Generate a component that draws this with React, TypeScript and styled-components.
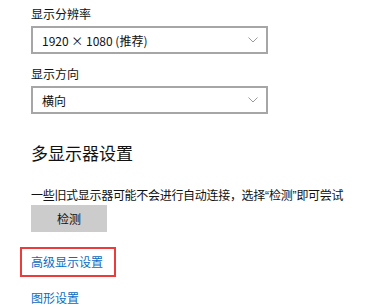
import React from "react";
import styled, { createGlobalStyle } from "styled-components";

const Global = createGlobalStyle`
  body {
    margin: 0;
    background: #fff;
    font-family: "Noto Sans CJK SC", "Microsoft YaHei", sans-serif;
    color: #000;
  }
`;

const Page = styled.div`
  width: 369px;
  height: 307px;
  overflow: hidden;
  padding: 6px 0 0 31px;
  box-sizing: border-box;
`;

const Label = styled.div`
  font-size: 12px;
  line-height: 16px;
  height: 16px;
  color: #111;
`;

const Select = styled.div`
  margin-top: 4px;
  width: 237px;
  height: 28px;
  box-sizing: border-box;
  border: 2px solid #a6a6a6;
  display: flex;
  align-items: center;
  justify-content: space-between;
  padding: 0 8px 0 9px;
  font-size: 12px;
  color: #111;
`;

const Field = styled.div<{ $top?: number }>`
  margin-top: ${(p) => p.$top ?? 0}px;
`;

const Heading = styled.div`
  margin-top: 27px;
  font-size: 17px;
  line-height: 24px;
  color: #111;
`;

const Desc = styled.div`
  margin-top: 22px;
  font-size: 12px;
  line-height: 16px;
  white-space: nowrap;
  letter-spacing: -0.3px;
  color: #111;
`;

const Quote = styled.span`
  font-family: "Liberation Sans", sans-serif;
  letter-spacing: 0;
`;

const Button = styled.div`
  margin-top: 1px;
  width: 76px;
  height: 27px;
  background: #cccccc;
  display: flex;
  align-items: center;
  justify-content: center;
  font-size: 12px;
  color: #111;
`;

const Highlight = styled.div`
  margin: 15px 0 0 -11px;
  width: 96px;
  height: 30px;
  box-sizing: border-box;
  border: 2px solid #ec3b3b;
  display: flex;
  align-items: center;
  padding-left: 9px;
`;

const Link = styled.div<{ $top?: number }>`
  margin-top: ${(p) => p.$top ?? 0}px;
  font-size: 12px;
  line-height: 16px;
  color: #0b6bc4;
`;

function Chevron() {
  return (
    <svg width="10" height="6" viewBox="0 0 10 6" fill="none">
      <path d="M0.5 0.5 L5 5 L9.5 0.5" stroke="#9a9a9a" strokeWidth="1" />
    </svg>
  );
}

export default function App() {
  return (
    <>
      <Global />
      <Page>
        <Field>
          <Label>显示分辨率</Label>
          <Select>
            <span>1920 × 1080 (推荐)</span>
            <Chevron />
          </Select>
        </Field>
        <Field $top={12}>
          <Label>显示方向</Label>
          <Select>
            <span>横向</span>
            <Chevron />
          </Select>
        </Field>
        <Heading>多显示器设置</Heading>
        <Desc>
          一些旧式显示器可能不会进行自动连接，选择<Quote>“</Quote>检测<Quote>”</Quote>即可尝试
        </Desc>
        <Button>检测</Button>
        <Highlight>
          <Link>高级显示设置</Link>
        </Highlight>
        <Link $top={13}>图形设置</Link>
      </Page>
    </>
  );
}
